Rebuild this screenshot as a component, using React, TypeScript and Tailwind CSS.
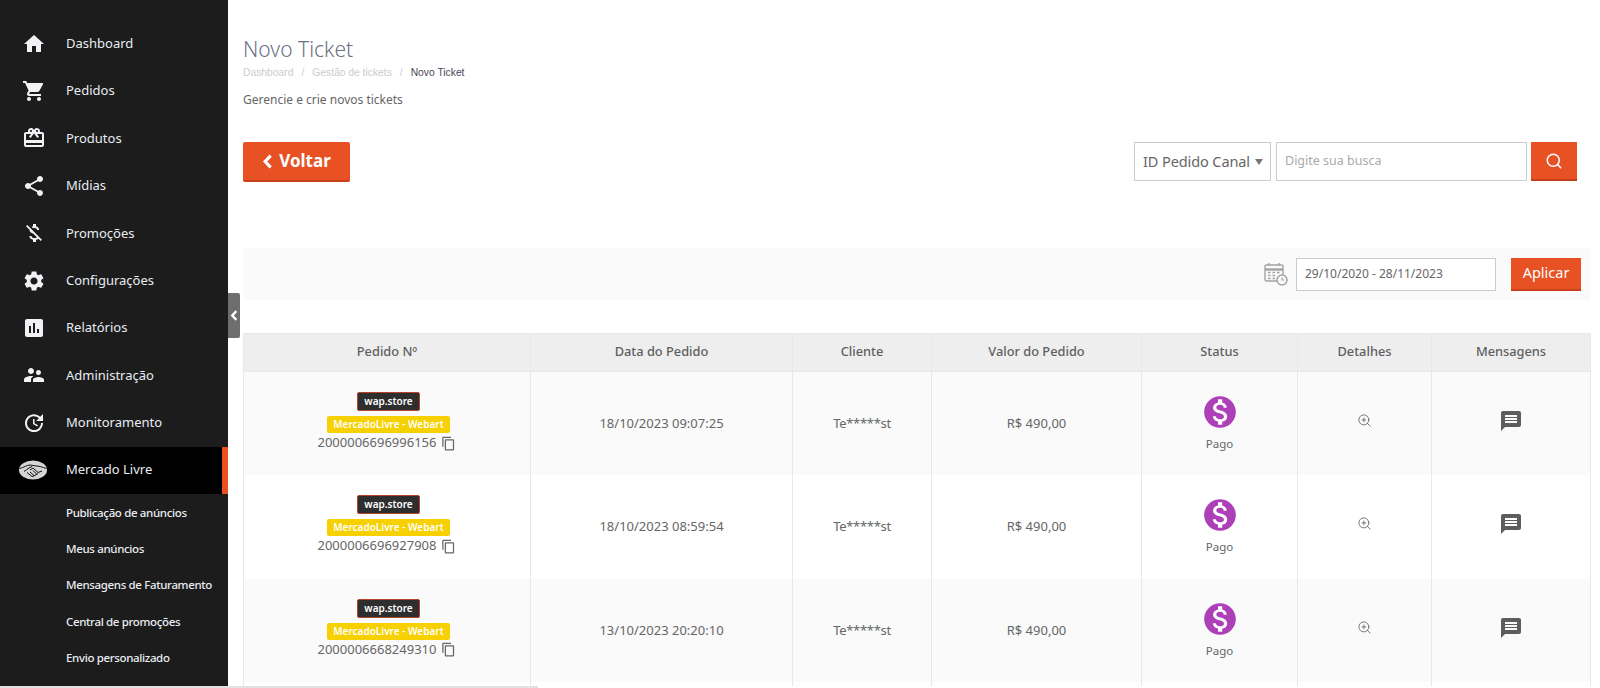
// App.tsx
// Novo Ticket page: dark sidebar on the left, header, search bar, date filter and orders table.

import type { ReactNode } from 'react'
import {
  MdAssessment,
  MdCardGiftcard,
  MdHome,
  MdMessage,
  MdMoneyOff,
  MdMonetizationOn,
  MdOutlineContentCopy,
  MdSettings,
  MdShare,
  MdShoppingCart,
  MdSupervisorAccount,
  MdUpdate,
} from 'react-icons/md'
import { FiSearch } from 'react-icons/fi'
import { ZoomIn } from 'lucide-react'

const UI_FONT = "font-['Noto_Sans',sans-serif]"

const menu: { label: string; icon: ReactNode }[] = [
  { label: 'Dashboard', icon: <MdHome size={24} /> },
  { label: 'Pedidos', icon: <MdShoppingCart size={24} /> },
  { label: 'Produtos', icon: <MdCardGiftcard size={24} /> },
  { label: 'Mídias', icon: <MdShare size={24} /> },
  { label: 'Promoções', icon: <MdMoneyOff size={24} /> },
  { label: 'Configurações', icon: <MdSettings size={24} /> },
  { label: 'Relatórios', icon: <MdAssessment size={24} /> },
  { label: 'Administração', icon: <MdSupervisorAccount size={24} /> },
  { label: 'Monitoramento', icon: <MdUpdate size={24} /> },
]

const subMenu = [
  'Publicação de anúncios',
  'Meus anúncios',
  'Mensagens de Faturamento',
  'Central de promoções',
  'Envio personalizado',
]

const orders = [
  { id: '2000006696996156', date: '18/10/2023 09:07:25' },
  { id: '2000006696927908', date: '18/10/2023 08:59:54' },
  { id: '2000006668249310', date: '13/10/2023 20:20:10' },
]

const columns = [
  { label: 'Pedido Nº', width: 'w-[287px]' },
  { label: 'Data do Pedido', width: 'w-[262px]' },
  { label: 'Cliente', width: 'w-[139px]' },
  { label: 'Valor do Pedido', width: 'w-[210px]' },
  { label: 'Status', width: 'w-[156px]' },
  { label: 'Detalhes', width: 'w-[134px]' },
  { label: 'Mensagens', width: 'w-[159px]' },
]

/** Heavy left chevron, used by the Voltar button and the collapse handle. */
function BoldChevron({ width, height }: { width: number; height: number }) {
  return (
    <svg width={width} height={height} viewBox="0 0 10 14" fill="none" stroke="currentColor" strokeWidth="3">
      <path d="M8 1.5 L2.8 7 L8 12.5" />
    </svg>
  )
}

function HandshakeIcon() {
  return (
    <svg width="28" height="20" viewBox="0 0 28 20">
      <ellipse cx="14" cy="10" rx="14" ry="9.5" fill="#d4d4d4" />
      <path d="M0.5 8.5 C5 7.5 8 5 11 5 C13 5 15 6 17 6 C20 6 23 7 27.5 8.5" fill="none" stroke="#111" strokeWidth="1" />
      <path d="M5 11.5 L10 8 L13 6.5 M23 11 L19 12.5 L14 8 L11 10 M8 12.5 L13 16.5 L15 16 L19 13.5 M11 12 L15 15.5 M14 10.5 L17.5 14" fill="none" stroke="#111" strokeWidth="1" />
    </svg>
  )
}

function CalendarClockIcon() {
  return (
    <svg width="24" height="24" viewBox="0 0 24 24" fill="none" stroke="#a3a3a3">
      <rect x="1" y="3" width="18" height="16" rx="1.5" strokeWidth="1.4" />
      <path d="M1 7.5h18" strokeWidth="2.4" />
      <path d="M5 1v3M15 1v3" strokeWidth="1.4" />
      <path d="M4 10.5h2.5M8.5 10.5H11M13 10.5h2.5M4 13.5h2.5M8.5 13.5H11M4 16.5h2.5M8.5 16.5H11" strokeWidth="1.6" />
      <circle cx="18" cy="18" r="5" fill="#fafafa" strokeWidth="1.5" />
      <path d="M18 15.5V18h2.2" strokeWidth="1.2" />
    </svg>
  )
}

function Sidebar() {
  return (
    <aside className="w-[228px] h-[686px] shrink-0 bg-[#1c1c1c] pt-[20px] text-[#e8ecf2] text-[13px]">
      {menu.map((item) => (
        <div key={item.label} className="h-[47.4px] flex items-center">
          <span className="w-[66px] pl-[22px] shrink-0 text-[#f0f2f5]">{item.icon}</span>
          <span>{item.label}</span>
        </div>
      ))}
      <div className="h-[47px] flex items-center bg-black border-r-[6px] border-[#e8501f]">
        <span className="w-[66px] pl-[19px] shrink-0">
          <HandshakeIcon />
        </span>
        <span>Mercado Livre</span>
      </div>
      <div className="pt-[1px]">
        {subMenu.map((label) => (
          <div key={label} className="h-[36.2px] flex items-center pl-[66px] text-[11.5px] tracking-[-0.35px] font-medium">
            {label}
          </div>
        ))}
      </div>
    </aside>
  )
}

function Header() {
  return (
    <div className="pt-[37px] pl-[15px]">
      <h1 className="text-[21px] leading-[24px] text-[#6d7184] font-light">Novo Ticket</h1>
      <div className="mt-[5px] flex items-center text-[10.3px] leading-[14px] font-['Liberation_Sans',sans-serif] text-[#cccccc]">
        <span>Dashboard</span>
        <span className="mx-[8px]">/</span>
        <span>Gestão de tickets</span>
        <span className="mx-[8px]">/</span>
        <span className="text-[#4c4556]">Novo Ticket</span>
      </div>
      <p className="mt-[12px] text-[12px] leading-[16px] text-[#666]">Gerencie e crie novos tickets</p>
    </div>
  )
}

function Toolbar() {
  return (
    <div className="mt-[34px] pl-[15px] pr-[23px] flex items-start justify-between">
      <button className="h-[40px] w-[107px] flex items-center justify-center gap-[6px] rounded-[2px] bg-[#e85124] border-b-2 border-[#c8401a] text-white text-[17px] font-bold">
        <BoldChevron width={11} height={15} />
        Voltar
      </button>
      <div className="flex items-center">
        <div className="h-[39px] w-[137px] border border-[#cccccc] flex items-center justify-between pl-[8px] pr-[7px] text-[14.5px] text-[#666] whitespace-nowrap tracking-[-0.1px]">
          <span>ID Pedido Canal</span>
          <span className="w-0 h-0 border-x-[4px] border-x-transparent border-t-[6px] border-t-[#777]" />
        </div>
        <div className="ml-[5px] h-[39px] w-[251px] border border-[#cccccc] flex items-center pl-[8px] text-[12.5px] text-[#aaaaaa]">
          Digite sua busca
        </div>
        <button className="ml-[4px] h-[39px] w-[46px] flex items-center justify-center bg-[#e85124] border-b-2 border-[#c8401a] text-white">
          <FiSearch size={18} />
        </button>
      </div>
    </div>
  )
}

function DateFilter() {
  return (
    <div className="mt-[66px] ml-[15px] mr-[10px] h-[52px] pr-[9px] bg-[#fafafa] flex items-center justify-end">
      <CalendarClockIcon />
      <div className="ml-[8px] h-[33px] w-[200px] border border-[#cccccc] bg-white flex items-center pl-[8px] text-[12px] text-[#666]">
        29/10/2020 - 28/11/2023
      </div>
      <button className="ml-[15px] h-[33px] w-[70px] bg-[#e85124] border-b-2 border-[#c8401a] text-white text-[14.5px]">
        Aplicar
      </button>
    </div>
  )
}

function OrdersTable() {
  return (
    <table className="mt-[33px] ml-[15px] table-fixed border-collapse w-[1347px] text-[13px] text-[#666]">
      <thead>
        <tr className="h-[38px] bg-[#eeeeee]">
          {columns.map((col) => (
            <th key={col.label} className={`${col.width} border border-[#e8e8e8] font-medium text-[12.8px] text-[#5f5f5f] pb-[1px]`}>
              {col.label}
            </th>
          ))}
        </tr>
      </thead>
      <tbody>
        {[...orders, null].map((order, i) => (
          <tr key={order?.id ?? 'next'} className={`h-[103.67px] ${i % 2 === 0 ? 'bg-[#fafafa]' : 'bg-white'}`}>
            {order && (
              <>
                <td className="border-x border-[#e8e8e8] text-center align-top pt-[20px]">
                  <div className="flex flex-col items-center">
                    <span className="ml-[3px] h-[19px] px-[6px] flex items-center bg-[#2e2e2e] border border-[#b5432a] rounded-[2px] text-white text-[10px] font-semibold">
                      wap.store
                    </span>
                    <span className="ml-[3px] mt-[5px] h-[17px] px-[6px] flex items-center bg-[#f7d000] rounded-[2px] text-white text-[10px] font-semibold">
                      MercadoLivre - Webart
                    </span>
                    <span className="mt-[1px] h-[18px] flex items-center gap-[5px] text-[13px]">
                      {order.id}
                      <MdOutlineContentCopy size={15} />
                    </span>
                  </div>
                </td>
                <td className="border-x border-[#e8e8e8] text-center">{order.date}</td>
                <td className="border-x border-[#e8e8e8] text-center tracking-[-0.3px]">Te*****st</td>
                <td className="border-x border-[#e8e8e8] text-center">R$ 490,00</td>
                <td className="border-x border-[#e8e8e8] text-center align-top pt-[21px]">
                  <div className="flex flex-col items-center">
                    <MdMonetizationOn size={38} className="text-[#ad3fb9]" />
                    <span className="mt-[5px] text-[11.5px] leading-[16px]">Pago</span>
                  </div>
                </td>
                <td className="border-x border-[#e8e8e8] align-top pt-[41px]">
                  <ZoomIn size={15} strokeWidth={1.4} className="mx-auto text-[#666]" />
                </td>
                <td className="border-x border-[#e8e8e8] align-top pt-[37px]">
                  <MdMessage size={24} className="mx-auto text-[#5d5d5d]" />
                </td>
              </>
            )}
            {!order && columns.map((col) => <td key={col.label} className="border-x border-[#e8e8e8]" />)}
          </tr>
        ))}
      </tbody>
    </table>
  )
}

export default function App() {
  return (
    <div className={`relative h-[688px] w-[1600px] overflow-hidden bg-white flex ${UI_FONT}`}>
      <Sidebar />
      {/* Collapse handle over the sidebar edge */}
      <div className="absolute left-[228px] top-[293px] h-[45px] w-[12px] bg-[#6e6e6e] rounded-r-[2px] flex items-center justify-center text-white">
        <BoldChevron width={8} height={11} />
      </div>
      <main className="flex-1 min-w-0">
        <Header />
        <Toolbar />
        <DateFilter />
        <OrdersTable />
      </main>
      {/* Browser scrollbar along the bottom */}
      <div className="absolute left-0 bottom-0 h-[2px] w-full bg-white">
        <div className="h-full w-[538px] bg-[#dfe3e6]" />
      </div>
    </div>
  )
}
